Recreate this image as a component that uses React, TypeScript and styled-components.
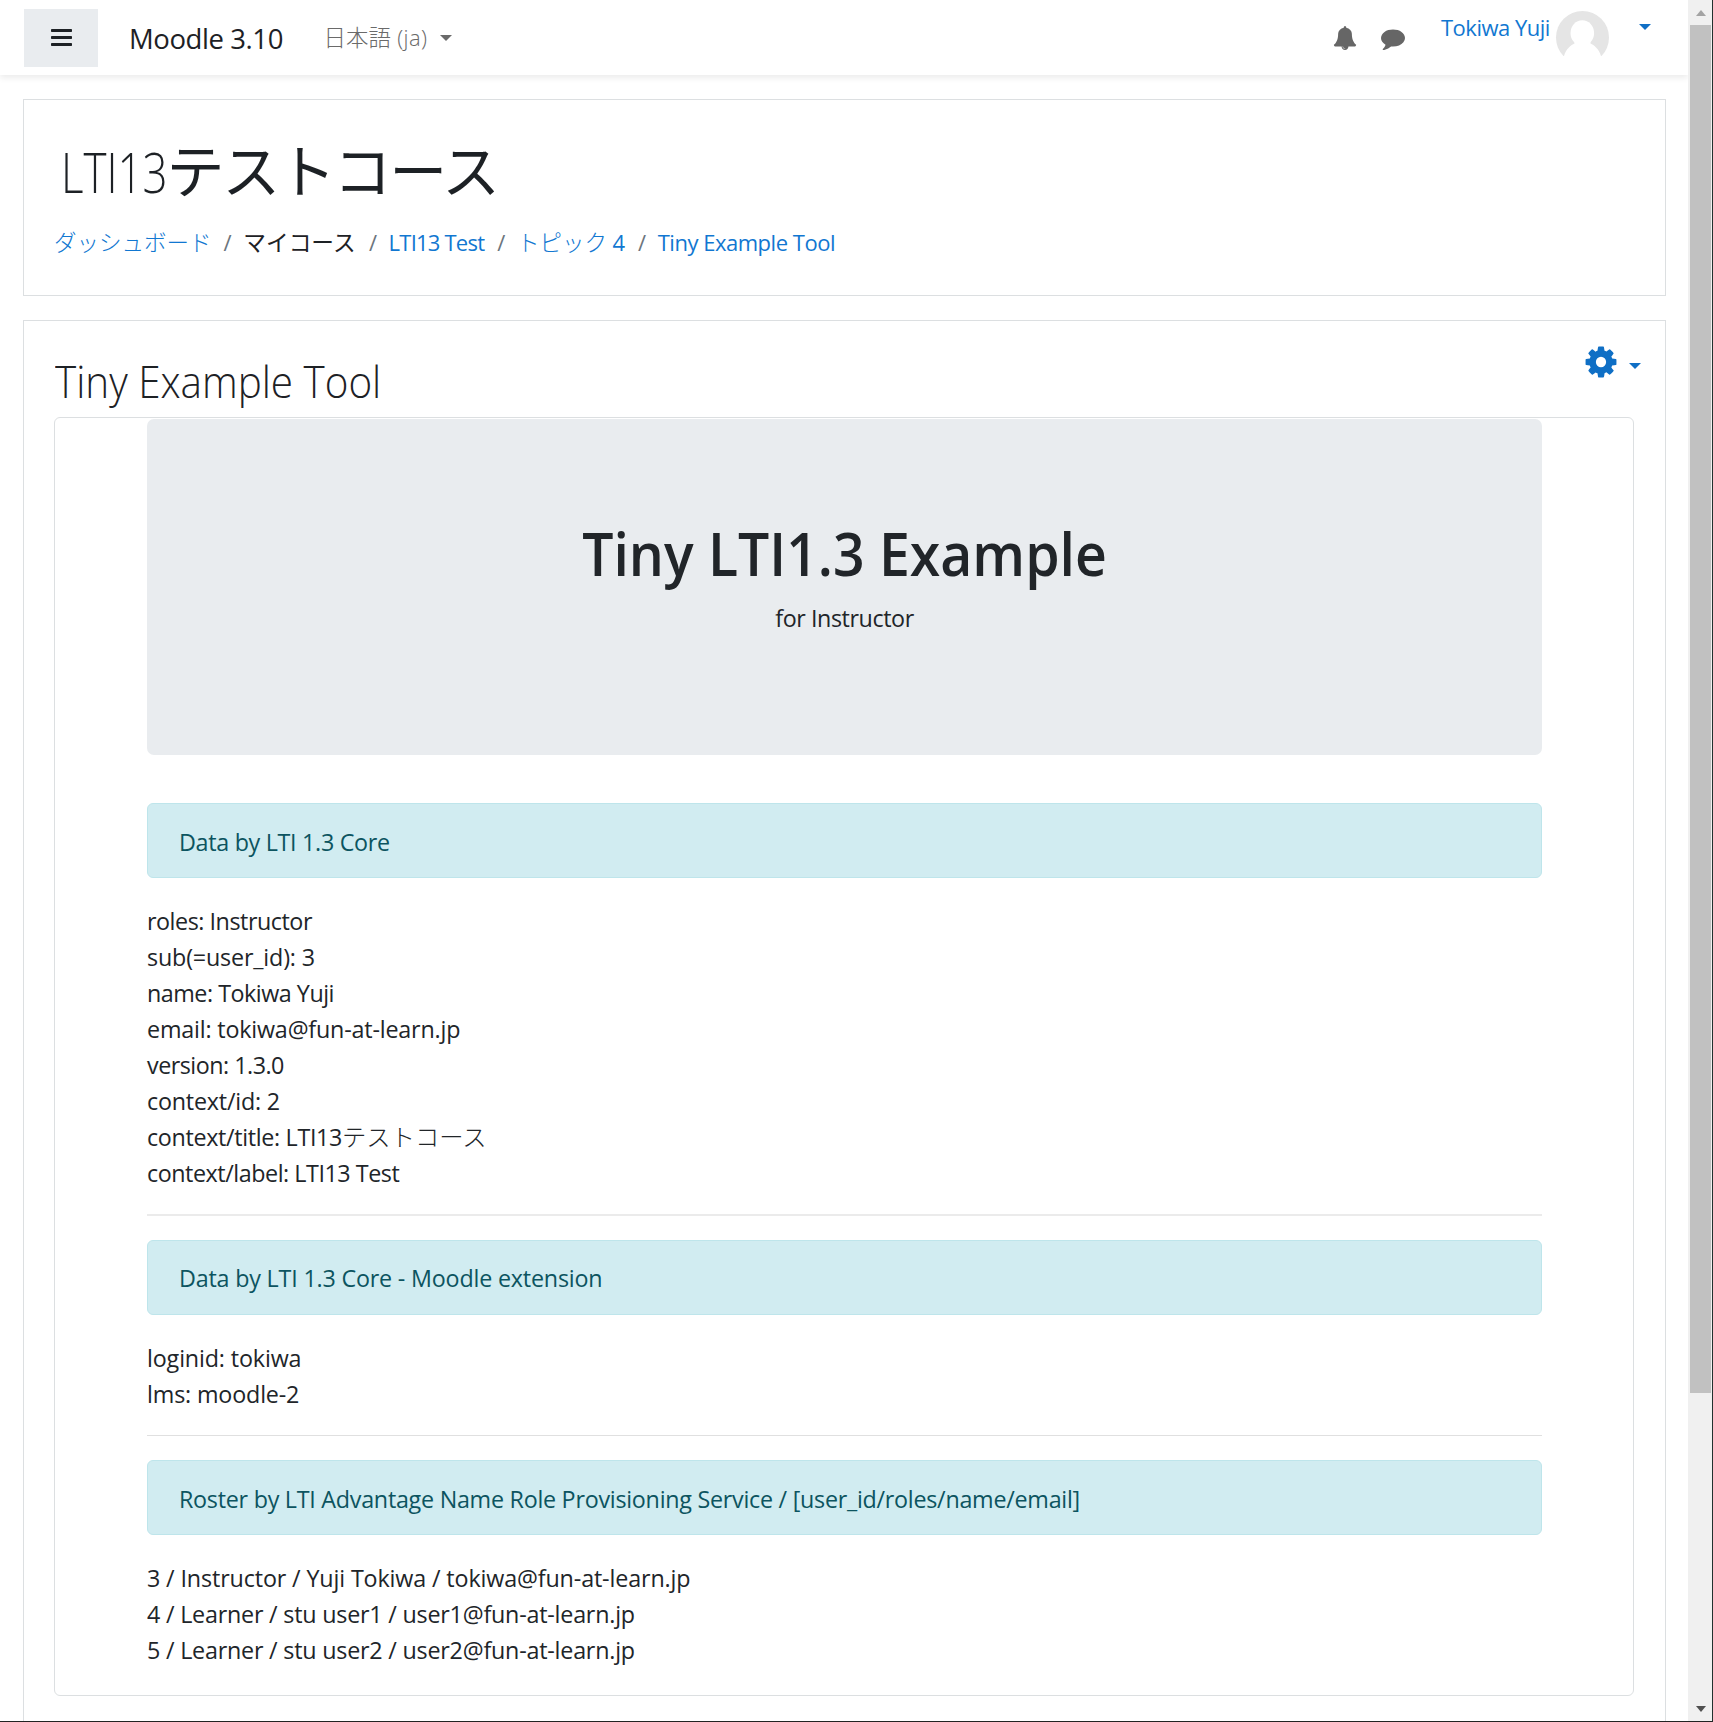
import React from 'react';
import styled, { createGlobalStyle } from 'styled-components';

const LATIN = '"Open Sans", "Noto Sans", "Noto Sans CJK JP", sans-serif';
const JAPANESE = '"Noto Sans CJK JP", sans-serif';

const GlobalStyle = createGlobalStyle`
  *, *::before, *::after { box-sizing: border-box; }
  body { margin: 0; background: #fff; color: #1d2125; font-family: ${LATIN}; font-size: 22px; overflow: hidden; }
  h1, h2, h3, p, ol, ul, dl, dd { margin: 0; padding: 0; font-weight: inherit; }
  a { color: #1177d1; text-decoration: none; }
`;

const Window = styled.div`
  display: flex;
  width: 1713px;
  height: 1722px;
  overflow: hidden;
  border-right: 1px solid #22302e;
  border-bottom: 1px solid #222;
`;

const Page = styled.div`
  display: flex;
  flex-direction: column;
  width: 1688px;
  flex: none;
`;

const Ja = styled.span<{ $weight?: number; $size?: number }>`
  font-family: ${JAPANESE};
  font-weight: ${(p) => p.$weight ?? 300};
  font-size: ${(p) => p.$size ?? 22.5}px;
  line-height: 0;
  letter-spacing: 0;
`;

const Navbar = styled.header`
  display: flex;
  flex: none;
  align-items: center;
  height: 75px;
  padding-left: 24px;
  background: #fff;
  box-shadow: 0 3px 6px rgba(0, 0, 0, 0.08);
`;

const MenuButton = styled.button`
  display: flex;
  align-items: center;
  justify-content: center;
  width: 74px;
  height: 58px;
  padding: 0;
  border: 0;
  background: #e9ecef;
`;

const Brand = styled.a`
  && { color: #1d2125; }
  margin-left: 31px;
  width: 194.5px;
  padding-top: 2px;
  font-size: 27.5px;
  line-height: 40px;
  letter-spacing: -0.42px;
  white-space: nowrap;
`;

const Language = styled.div`
  display: flex;
  align-items: center;
  color: #6a6a6a;
  font-weight: 300;
  line-height: 34px;
  letter-spacing: 0.4px;
  white-space: nowrap;
  gap: 12.5px;

  & > span { margin-top: -1px; }
`;

const Caret = styled.i<{ $color: string }>`
  display: block;
  border: 6.5px solid transparent;
  border-top-color: ${(p) => p.$color};
  border-bottom: 0;
`;

const NavIcons = styled.div`
  display: flex;
  gap: 24px;
  margin-left: auto;
  color: #666;
`;

const UserMenu = styled.div`
  display: flex;
  align-self: stretch;
  width: 247px;
  margin-left: 36px;
`;

const UserName = styled.a`
  width: 114px;
  line-height: 55px;
  letter-spacing: -0.5px;
  white-space: nowrap;
`;

const UserCaret = styled.div`
  margin: 24px 0 0 30px;
`;

const Panel = styled.section<{ $grow?: boolean }>`
  flex: ${(p) => (p.$grow ? 1 : 'none')};
  margin: 24px 22px 0 23px;
  border: 1px solid #dcdfe1;
  ${(p) => p.$grow && 'border-bottom: 0;'}
`;

const CourseHeader = styled.div`
  height: 195px;
  padding: 35px 30px 0;
`;

const CourseTitle = styled.h1`
  display: flex;
  padding-left: 6.5px;
  font-size: 54.5px;
  font-weight: 300;
  line-height: 74px;
`;

const TitleLatin = styled.span`
  width: 106px;
  transform: scaleX(0.805);
  transform-origin: left;
`;

const TitleKana = styled.span`
  height: 74px;
  font-family: ${JAPANESE};
  font-size: 58px;
  font-weight: 400;
  line-height: 67px;
  letter-spacing: -2.3px;
  white-space: nowrap;
`;

const Breadcrumb = styled.ol`
  display: flex;
  margin-top: 16px;
  list-style: none;
  line-height: 34px;
  white-space: nowrap;
`;

const Crumb = styled.li<{ $width: number; $track?: number }>`
  width: ${(p) => p.$width}px;
  letter-spacing: ${(p) => p.$track ?? 0}px;
`;

const Slash = styled.li`
  width: 31.3px;
  text-align: center;
  color: #6c757d;
`;

const ActivityHead = styled.div`
  display: flex;
  justify-content: space-between;
  height: 96px;
  padding: 33px 24px 0 31px;
`;

const ActivityTitle = styled.h2`
  font-size: 44px;
  font-weight: 300;
  line-height: 54px;
  white-space: nowrap;
  transform: scaleX(0.918);
  transform-origin: left;
`;

const Settings = styled.div`
  display: flex;
  align-items: center;
  gap: 10px;
  height: 36px;
  margin-top: -10px;
  color: #0f6fc5;
`;

const SettingsCaret = styled.div`
  padding-top: 8px;
`;

const ToolFrame = styled.div`
  height: 1279px;
  margin: 0 31px 0 30px;
  padding: 1px 91px 0 92px;
  border: 1px solid #dcdfe1;
  border-radius: 6px;
`;

const Jumbotron = styled.div`
  height: 336px;
  margin-bottom: 48px;
  padding-top: 98px;
  border-radius: 7px;
  background: #e9ecef;
  color: #212529;
  text-align: center;
`;

const JumboTitle = styled.h3`
  margin-bottom: 11px;
  font-size: 60px;
  font-weight: 600;
  line-height: 72px;
  transform: scaleX(0.922);
`;

const Line = styled.p<{ $track?: number }>`
  font-size: 23.3px;
  line-height: 36px;
  letter-spacing: ${(p) => p.$track ?? 0}px;
  color: #212529;
  white-space: nowrap;
`;

const Alert = styled.div<{ $track: number; $top?: number }>`
  height: 75px;
  margin-bottom: 25px;
  padding: ${(p) => p.$top ?? 20}px 31px 0;
  border: 1px solid #bee5eb;
  border-radius: 6px;
  background: #d1ecf1;
  color: #0c5460;
  font-size: 23.3px;
  line-height: 36px;
  letter-spacing: ${(p) => p.$track}px;
  white-space: nowrap;
`;

const Divider = styled.div<{ $height: number }>`
  height: ${(p) => p.$height}px;
  margin: 23px 0 24px;
  background: ${(p) => (p.$height > 1 ? '#ebebeb' : '#e0e0e0')};
`;

const Scrollbar = styled.div`
  display: flex;
  flex: 1;
  flex-direction: column;
  align-items: center;
  justify-content: space-between;
  padding: 0 1px 0 2px;
  background: #f0f0f0;
`;

const ScrollThumb = styled.div`
  align-self: stretch;
  height: 1368px;
  margin-bottom: auto;
  background: #c1c1c1;
`;

const ScrollArrow = styled.div<{ $down?: boolean }>`
  height: ${(p) => (p.$down ? 15 : 25)}px;
  padding-top: ${(p) => (p.$down ? 0 : 10)}px;
  &::before {
    content: '';
    display: block;
    border: 5.5px solid transparent;
    ${(p) => (p.$down ? 'border-top: 6px solid #505050; border-bottom: 0;' : 'border-bottom: 6px solid #a3a3a3; border-top: 0;')}
  }
`;

const Glyph = ({ size, d }: { size: number; d: string }) => (
  <svg width={size} height={size} viewBox="0 0 1792 1792" fill="currentColor"><path d={d} /></svg>
);

const BELL = 'M912 1696q0-16-16-16-59 0-101.5-42.5t-42.5-101.5q0-16-16-16t-16 16q0 73 51.5 124.5t124.5 51.5q16 0 16-16zm816-288q0 52-38 90t-90 38h-448q0 106-75 181t-181 75-181-75-75-181h-448q-52 0-90-38t-38-90q50-42 91-88t85-119.5 74.5-158.5 50-206 19.5-260q0-152 117-282.5t307-158.5q-8-19-8-39 0-40 28-68t68-28 68 28 28 68q0 20-8 39 190 28 307 158.5t117 282.5q0 139 19.5 260t50 206 74.5 158.5 85 119.5 91 88z';
const COMMENT = 'M1792 896q0 174-120 321.5t-326 233-450 85.5q-70 0-145-8-198 175-460 242-49 14-114 22-17 2-30.5-9t-17.5-29v-1q-3-4-.5-12t2-10 4.5-9.5l6-9 7-8.5 8-9q7-8 31-34.5t34.5-38 31-39.5 32.5-51 27-59 26-76q-157-89-247.5-220t-90.5-281q0-130 71-248.5t191-204.5 286-136.5 348-50.5 348 50.5 286 136.5 191 204.5 71 248.5z';
const COG = 'M1152 896q0-106-75-181t-181-75-181 75-75 181 75 181 181 75 181-75 75-181zm512-109v222q0 12-8 23t-20 13l-185 28q-19 54-39 91 35 50 107 138 10 12 10 25t-9 23q-27 37-99 108t-94 71q-12 0-26-9l-138-108q-44 23-91 38-16 136-29 186-7 28-36 28h-222q-14 0-24.5-8.5t-11.5-21.5l-28-184q-49-16-90-37l-141 107q-10 9-25 9-14 0-25-11-126-114-165-168-7-10-7-23 0-12 8-23 15-21 51-66.5t54-70.5q-27-50-41-99l-183-27q-13-2-21-12.5t-8-23.5v-222q0-12 8-23t19-13l186-28q14-46 39-92-40-57-107-138-10-12-10-24 0-10 9-23 26-36 98.5-107.5t94.5-71.5q13 0 26 10l138 107q44-23 91-38 16-136 29-186 7-28 36-28h222q14 0 24.5 8.5t11.5 21.5l28 184q49 16 90 37l142-107q9-9 24-9 13 0 25 10 129 119 165 170 7 8 7 22 0 12-8 23-15 21-51 66.5t-54 70.5q26 50 41 98l183 28q13 2 21 12.5t8 23.5z';

const Avatar = () => (
  <svg width="54" height="56" viewBox="0 0 54 56">
    <circle cx="27.5" cy="37.5" r="26.5" fill="#e5e5e5" />
    <ellipse cx="27.3" cy="33" rx="11.8" ry="12.8" fill="#fff" />
    <path d="M9 56 C11 49 16 45 19.500 43.500 V40 H35.500 V43.500 C39 45 44 49 46 56 Z" fill="#fff" />
  </svg>
);

type Row = { text: string; track: number; kana?: string };

const coreRows: Row[] = [
  { text: 'roles: Instructor', track: -0.46 },
  { text: 'sub(=user_id): 3', track: -0.17 },
  { text: 'name: Tokiwa Yuji', track: -0.48 },
  { text: 'email: tokiwa@fun-at-learn.jp', track: -0.18 },
  { text: 'version: 1.3.0', track: -0.5 },
  { text: 'context/id: 2', track: -0.2 },
  { text: 'context/title: LTI13', track: -0.33, kana: 'テストコース' },
  { text: 'context/label: LTI13 Test', track: -0.45 },
];

const extensionRows: Row[] = [
  { text: 'loginid: tokiwa', track: -0.14 },
  { text: 'lms: moodle-2', track: -0.16 },
];

const rosterRows: Row[] = [
  { text: '3 / Instructor / Yuji Tokiwa / tokiwa@fun-at-learn.jp', track: -0.13 },
  { text: '4 / Learner / stu user1 / user1@fun-at-learn.jp', track: -0.21 },
  { text: '5 / Learner / stu user2 / user2@fun-at-learn.jp', track: -0.21 },
];

const Rows = ({ rows }: { rows: Row[] }) => (
  <div>
    {rows.map((r) => (
      <Line key={r.text} $track={r.track}>
        {r.text}
        {r.kana && <Ja $size={24.3}>{r.kana}</Ja>}
      </Line>
    ))}
  </div>
);

export default function App() {
  return (
    <>
      <GlobalStyle />
      <Window>
        <Page>
          <Navbar>
            <MenuButton aria-label="menu">
              <svg width="21" height="17" viewBox="0 0 21 17" fill="#1d2125">
                <rect width="21" height="3" rx="0.700" />
                <rect y="7" width="21" height="3" rx="0.700" />
                <rect y="14" width="21" height="3" rx="0.700" />
              </svg>
            </MenuButton>
            <Brand>Moodle 3.10</Brand>
            <Language>
              <span><Ja>日本語</Ja> (ja)</span>
              <Caret $color="#6a6a6a" />
            </Language>
            <NavIcons>
              <Glyph size={24} d={BELL} />
              <Glyph size={24} d={COMMENT} />
            </NavIcons>
            <UserMenu>
              <UserName>Tokiwa Yuji</UserName>
              <Avatar />
              <UserCaret><Caret $color="#0f6fc5" /></UserCaret>
            </UserMenu>
          </Navbar>

          <Panel>
            <CourseHeader>
              <CourseTitle>
                <TitleLatin>LTI13</TitleLatin>
                <TitleKana>テストコース</TitleKana>
              </CourseTitle>
              <Breadcrumb>
                <Crumb $width={158}><a><Ja>ダッシュボード</Ja></a></Crumb>
                <Slash>/</Slash>
                <Crumb $width={114}><Ja $weight={400} $size={22.7}>マイコース</Ja></Crumb>
                <Slash>/</Slash>
                <Crumb $width={97} $track={-0.78}><a>LTI13 Test</a></Crumb>
                <Slash>/</Slash>
                <Crumb $width={109.5}><a><Ja>トピック</Ja> 4</a></Crumb>
                <Slash>/</Slash>
                <Crumb $width={180} $track={-0.48}><a>Tiny Example Tool</a></Crumb>
              </Breadcrumb>
            </CourseHeader>
          </Panel>

          <Panel $grow>
            <ActivityHead>
              <ActivityTitle>Tiny Example Tool</ActivityTitle>
              <Settings>
                <Glyph size={36} d={COG} />
                <SettingsCaret><Caret $color="#0f6fc5" /></SettingsCaret>
              </Settings>
            </ActivityHead>
            <ToolFrame>
              <Jumbotron>
                <JumboTitle>Tiny LTI1.3 Example</JumboTitle>
                <Line $track={-0.42}>for Instructor</Line>
              </Jumbotron>
              <Alert $track={-0.3}>Data by LTI 1.3 Core</Alert>
              <Rows rows={coreRows} />
              <Divider $height={2} />
              <Alert $track={-0.19} $top={19}>Data by LTI 1.3 Core - Moodle extension</Alert>
              <Rows rows={extensionRows} />
              <Divider $height={1} />
              <Alert $track={-0.26}>Roster by LTI Advantage Name Role Provisioning Service / [user_id/roles/name/email]</Alert>
              <Rows rows={rosterRows} />
            </ToolFrame>
          </Panel>
        </Page>
        <Scrollbar>
          <ScrollArrow />
          <ScrollThumb />
          <ScrollArrow $down />
        </Scrollbar>
      </Window>
    </>
  );
}
